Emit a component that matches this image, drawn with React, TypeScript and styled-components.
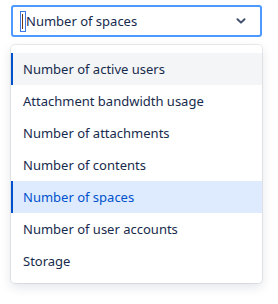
import React, { FC } from 'react';
import styled, { createGlobalStyle } from 'styled-components';

const GlobalStyle = createGlobalStyle`
  body {
    margin: 0;
    background: #ffffff;
    font-family: 'Noto Sans', 'Liberation Sans', sans-serif;
  }
`;

const Page = styled.div`
  width: 278px;
  height: 304px;
  padding: 5px 16px 0 11px;
  box-sizing: border-box;
`;

const Control = styled.div`
  height: 32px;
  box-sizing: border-box;
  border: 2px solid #4c9aff;
  border-radius: 3px;
  display: flex;
  align-items: center;
  padding: 0 14px 0 7px;
  color: #172b4d;
  font-size: 13px;
`;

const Caret = styled.span`
  position: relative;
  display: inline-block;
  width: 4px;
  height: 19px;
  border: 1px solid #3a7be6;
  margin-right: 0;

  &::after {
    content: '';
    position: absolute;
    left: 1px;
    top: 2px;
    width: 1px;
    height: 15px;
    background: #6b3a1e;
  }
`;

const Value = styled.span`
  flex: 1;
`;

const Menu = styled.div`
  margin-top: 8px;
  border-radius: 4px;
  padding: 8px 0 6px;
  box-shadow: 0 0 0 1px rgba(9, 30, 66, 0.08), 0 4px 11px rgba(9, 30, 66, 0.12);
  background: #fff;
`;

const Option = styled.div<{ $state?: 'hover' | 'selected' }>`
  height: 32px;
  display: flex;
  align-items: center;
  padding: 0 12px;
  font-size: 13px;
  color: ${(p) => (p.$state === 'selected' ? '#0052cc' : '#172b4d')};
  background: ${(p) =>
    p.$state === 'selected' ? '#deebff' : p.$state === 'hover' ? '#f4f5f7' : 'transparent'};
  box-shadow: ${(p) => (p.$state ? 'inset 2px 0 0 #0052cc' : 'none')};
`;

const Chevron: FC = () => (
  <svg width='10' height='6' viewBox='0 0 10 6'>
    <path d='M1.5 1.2 L5 4.6 L8.5 1.2' fill='none' stroke='#42526e' strokeWidth='2' strokeLinecap='round' strokeLinejoin='round' />
  </svg>
);

const options: { label: string; state?: 'hover' | 'selected' }[] = [
  { label: 'Number of active users', state: 'hover' },
  { label: 'Attachment bandwidth usage' },
  { label: 'Number of attachments' },
  { label: 'Number of contents' },
  { label: 'Number of spaces', state: 'selected' },
  { label: 'Number of user accounts' },
  { label: 'Storage' },
];

const App: FC = () => (
  <>
    <GlobalStyle />
    <Page>
      <Control>
        <Caret />
        <Value>Number of spaces</Value>
        <Chevron />
      </Control>
      <Menu>
        {options.map((o) => (
          <Option key={o.label} $state={o.state}>
            {o.label}
          </Option>
        ))}
      </Menu>
    </Page>
  </>
);

export default App;
